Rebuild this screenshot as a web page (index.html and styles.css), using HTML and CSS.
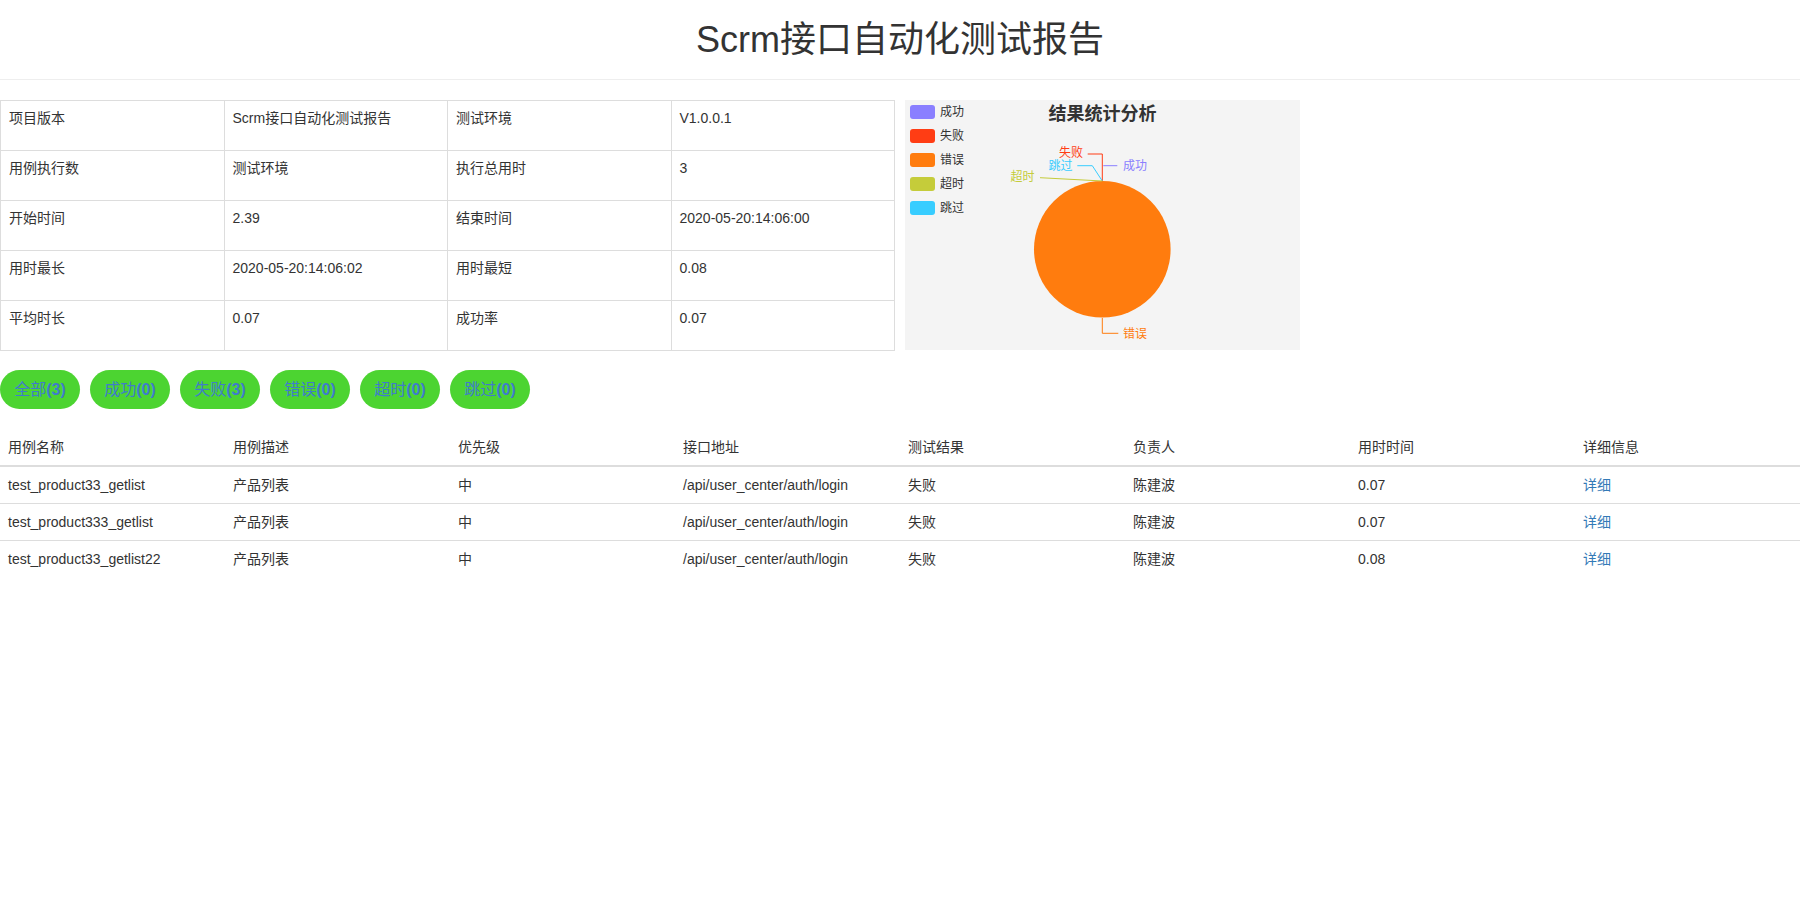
FILE: index.html
```html
<!DOCTYPE html>
<html lang="zh-CN">
<head>
<meta charset="utf-8">
<title>Scrm接口自动化测试报告</title>
<link rel="stylesheet" href="styles.css">
</head>
<body>
<header class="page-header">
  <h1 class="title">Scrm<span class="title-cjk">接口自动化测试报告</span></h1>
</header>
<main class="content">
  <section class="summary">
    <table class="info-table">
      <tr><td>项目版本</td><td>Scrm接口自动化测试报告</td><td>测试环境</td><td>V1.0.0.1</td></tr>
      <tr><td>用例执行数</td><td>测试环境</td><td>执行总用时</td><td>3</td></tr>
      <tr><td>开始时间</td><td>2.39</td><td>结束时间</td><td>2020-05-20:14:06:00</td></tr>
      <tr><td>用时最长</td><td>2020-05-20:14:06:02</td><td>用时最短</td><td>0.08</td></tr>
      <tr><td>平均时长</td><td>0.07</td><td>成功率</td><td>0.07</td></tr>
    </table>
    <div class="chart">
      <svg class="chart-svg" width="395" height="250" viewBox="0 0 395 250">
        <g class="legend">
          <rect x="5" y="5" width="25" height="14" rx="3" fill="#8a7fff"/>
          <text x="35" y="15.5">成功</text>
          <rect x="5" y="29" width="25" height="14" rx="3" fill="#ff3d14"/>
          <text x="35" y="39.5">失败</text>
          <rect x="5" y="53" width="25" height="14" rx="3" fill="#ff7c0e"/>
          <text x="35" y="63.5">错误</text>
          <rect x="5" y="77" width="25" height="14" rx="3" fill="#c5cc3a"/>
          <text x="35" y="87.5">超时</text>
          <rect x="5" y="101" width="25" height="14" rx="3" fill="#38cdff"/>
          <text x="35" y="111.5">跳过</text>
        </g>
        <text class="chart-title" x="197.5" y="20" text-anchor="middle">结果统计分析</text>
        <circle cx="197.3" cy="149.3" r="68.3" fill="#ff7c0e"/>
        <g fill="none" stroke-width="1">
          <polyline points="182.7,54 197.3,54 197.3,81" stroke="#ff3d14"/>
          <polyline points="172.3,65.7 187.3,65.7 197.3,81" stroke="#38cdff"/>
          <polyline points="198.3,65.7 212.3,65.7" stroke="#8a7fff"/>
          <polyline points="135,77.7 197.3,81" stroke="#c5cc3a"/>
          <polyline points="197.3,218 197.3,233.3 213.3,233.3" stroke="#ff7c0e"/>
        </g>
        <g class="pie-labels">
          <text x="178" y="57" text-anchor="end" fill="#ff3d14">失败</text>
          <text x="167.5" y="69.5" text-anchor="end" fill="#38cdff">跳过</text>
          <text x="218" y="69.5" fill="#8a7fff">成功</text>
          <text x="129.5" y="81" text-anchor="end" fill="#c5cc3a">超时</text>
          <text x="218" y="237.5" fill="#ff7c0e">错误</text>
        </g>
      </svg>
    </div>
  </section>

  <nav class="filters">
    <a class="filter-btn" href="#"><span class="cn">全部</span>(3)</a>
    <a class="filter-btn" href="#"><span class="cn">成功</span>(0)</a>
    <a class="filter-btn" href="#"><span class="cn">失败</span>(3)</a>
    <a class="filter-btn" href="#"><span class="cn">错误</span>(0)</a>
    <a class="filter-btn" href="#"><span class="cn">超时</span>(0)</a>
    <a class="filter-btn" href="#"><span class="cn">跳过</span>(0)</a>
  </nav>

  <table class="case-table">
    <thead>
      <tr><th>用例名称</th><th>用例描述</th><th>优先级</th><th>接口地址</th><th>测试结果</th><th>负责人</th><th>用时时间</th><th>详细信息</th></tr>
    </thead>
    <tbody>
      <tr><td>test_product33_getlist</td><td>产品列表</td><td>中</td><td>/api/user_center/auth/login</td><td>失败</td><td>陈建波</td><td>0.07</td><td><a class="detail-link" href="#">详细</a></td></tr>
      <tr><td>test_product333_getlist</td><td>产品列表</td><td>中</td><td>/api/user_center/auth/login</td><td>失败</td><td>陈建波</td><td>0.07</td><td><a class="detail-link" href="#">详细</a></td></tr>
      <tr><td>test_product33_getlist22</td><td>产品列表</td><td>中</td><td>/api/user_center/auth/login</td><td>失败</td><td>陈建波</td><td>0.08</td><td><a class="detail-link" href="#">详细</a></td></tr>
    </tbody>
  </table>
</main>
</body>
</html>
```

FILE: styles.css
```css
html, body {
  margin: 0;
  padding: 0;
  background: #fff;
}
body {
  font-family: "Liberation Sans", "Noto Sans CJK SC", sans-serif;
  font-size: 14px;
  line-height: 20px;
  color: #333;
}
.page-header {
  height: 79px;
  border-bottom: 1px solid #eee;
  display: flex;
  align-items: center;
  justify-content: center;
}
.title {
  margin: 0;
  font-size: 36px;
  line-height: 40px;
  font-weight: 400;
  color: #333;
}
.title-cjk {
  letter-spacing: 0;
}
.content {
  padding-top: 20px;
}
.summary {
  display: flex;
  align-items: flex-start;
}
.info-table {
  width: 895px;
  border-collapse: collapse;
  table-layout: fixed;
  border: 1px solid #ddd;
}
.info-table td {
  width: 25%;
  border: 1px solid #ddd;
  padding: 7px 8px 22px;
  vertical-align: top;
  line-height: 20px;
  font-size: 14px;
}
.chart {
  margin-left: 10px;
  width: 395px;
  height: 250px;
  background: #f4f4f4;
}
.chart-svg {
  display: block;
  font-family: "Liberation Sans", "Noto Sans CJK SC", sans-serif;
}
.legend text {
  font-size: 12px;
  fill: #333;
}
.chart-title {
  font-size: 18px;
  font-weight: 700;
  fill: #333;
}
.pie-labels text {
  font-size: 12px;
}
.filters {
  display: flex;
  gap: 10px;
  margin-top: 19px;
}
.filter-btn {
  width: 80px;
  height: 39px;
  border-radius: 20px;
  background: #4cd431;
  color: #3f7ccb;
  font-size: 16px;
  font-weight: 700;
  text-decoration: none;
  display: flex;
  align-items: center;
  justify-content: center;
}
.filter-btn .cn {
  font-weight: 400;
}
.case-table {
  width: 100%;
  margin-top: 20px;
  border-collapse: collapse;
  table-layout: fixed;
}
.case-table th,
.case-table td {
  padding: 8px;
  text-align: left;
  line-height: 20px;
  vertical-align: top;
}
.case-table th {
  font-weight: 400;
  border-bottom: 2px solid #ddd;
}
.case-table tbody tr + tr td {
  border-top: 1px solid #ddd;
}
.detail-link {
  color: #337ab7;
  text-decoration: none;
}
```
